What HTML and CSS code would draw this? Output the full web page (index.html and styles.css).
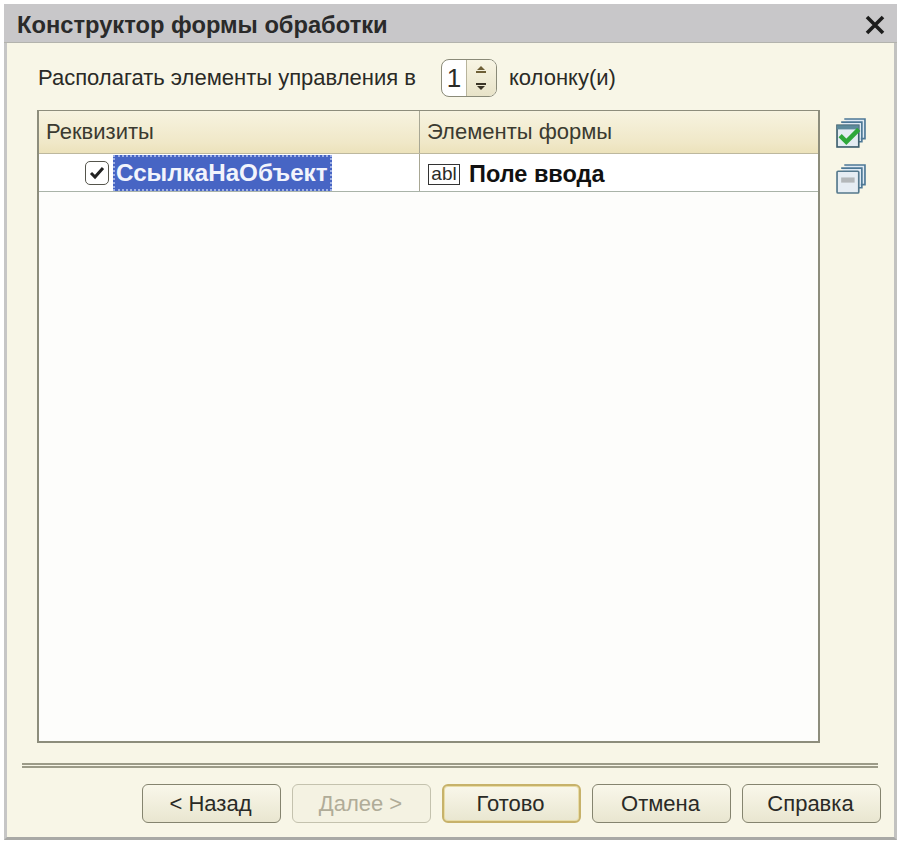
FILE: index.html
```html
<!DOCTYPE html>
<html lang="ru">
<head>
    <meta charset="UTF-8">
    <title>Конструктор формы обработки</title>
    <link rel="stylesheet" href="styles.css">
</head>
<body>
    <div class="window">
        <div class="titlebar">
            <span class="title">Конструктор формы обработки</span>
            <svg class="close" width="20" height="20" viewBox="0 0 20 20">
                <path d="M2 2 L18 18 M18 2 L2 18" stroke="#1c1c1c" stroke-width="3.6" fill="none"/>
            </svg>
        </div>
        <div class="content">
            <div class="columns-row">
                <span>Располагать элементы управления в</span>
                <div class="spinner">
                    <span class="spinner-value">1</span>
                    <span class="spinner-arrows">
                        <svg width="12" height="30" viewBox="0 0 12 30">
                            <path d="M6 3 L10 7 H2 Z M1 8 H11 V10 H1 Z" fill="#6e5f36"/>
                            <path d="M1 20 H11 V22 H1 Z M2 23 H10 L6 27 Z" fill="#3a3426"/>
                        </svg>
                    </span>
                </div>
                <span>колонку(и)</span>
            </div>

            <div class="table-row">
                <div class="table">
                    <div class="table-head">
                        <div class="cell col-left">Реквизиты</div>
                        <div class="cell col-right">Элементы формы</div>
                    </div>
                    <div class="table-line">
                        <div class="cell col-left attr-cell">
                            <span class="checkbox">
                                <svg width="16" height="14" viewBox="0 0 16 14">
                                    <path d="M2 7 L6 11 L14 2" stroke="#222" stroke-width="3" fill="none"/>
                                </svg>
                            </span>
                            <span class="selected">СсылкаНаОбъект</span>
                        </div>
                        <div class="cell col-right element-cell">
                            <span class="abl">abl</span>
                            <b>Поле ввода</b>
                        </div>
                    </div>
                </div>
                <div class="side-tools">
                    <svg width="30" height="30" viewBox="2 1 29 29">
                        <path d="M10 2 H30 V21 H26 M7 5 H27 V24 H23" fill="#dfeaf4" stroke="#4d7896" stroke-width="1.6"/>
                        <rect x="3" y="8" width="21" height="21" fill="#e4ecf2" stroke="#3e5f6e" stroke-width="1.6"/>
                        <rect x="3" y="8" width="21" height="4" fill="#5d8a9c"/>
                        <path d="M6 18 L12 24 L24 12" stroke="#2fa83a" stroke-width="4.4" fill="none"/>
                    </svg>
                    <svg width="30" height="30" viewBox="2 1 29 29">
                        <path d="M10 2 H30 V21 H26 M7 5 H27 V24 H23" fill="#dfeaf4" stroke="#4d7896" stroke-width="1.6"/>
                        <rect x="3" y="8" width="21" height="21" rx="1" fill="#e6edf3" stroke="#54788c" stroke-width="1.6"/>
                        <rect x="7" y="14" width="13" height="5" fill="#b4b8ba"/>
                    </svg>
                </div>
            </div>

            <div class="separator"></div>

            <div class="buttons">
                <button class="btn">&lt; Назад</button>
                <button class="btn" disabled>Далее &gt;</button>
                <button class="btn btn-default">Готово</button>
                <button class="btn">Отмена</button>
                <button class="btn">Справка</button>
            </div>
        </div>
    </div>
</body>
</html>
```

FILE: styles.css
```css
html, body {
    margin: 0;
    height: 100%;
    background: #ffffff;
}

body {
    padding: 4px 5px 4px 4px;
    box-sizing: border-box;
    font-family: 'Liberation Sans', Arial, sans-serif;
    font-size: 22px;
    color: #2a2a26;
}

.window {
    height: 100%;
    display: flex;
    flex-direction: column;
    box-sizing: border-box;
    border: 3px solid #c6c6c6;
    border-top: none;
    border-bottom-color: #a9a9a6;
    border-right-color: #c2c2c0;
}

.titlebar {
    height: 39px;
    flex: none;
    margin: 0 -3px;
    padding: 4px 12px 0 13px;
    background: #c8c7c9;
    border-bottom: 1px solid #b3b3ad;
    box-sizing: border-box;
    display: flex;
    justify-content: space-between;
    align-items: center;
}

.title {
    font-size: 23.7px;
    font-weight: bold;
    color: #2a2a2a;
}

.content {
    flex: 1;
    display: flex;
    flex-direction: column;
    background: #f8f6e7;
    padding: 0 13px 14px 30px;
    min-height: 0;
}

.columns-row {
    height: 67px;
    flex: none;
    box-sizing: border-box;
    padding: 3px 0 0 1px;
    display: flex;
    align-items: center;
}

.spinner {
    width: 56px;
    height: 38px;
    margin: 0 12px 0 25px;
    display: flex;
    box-sizing: border-box;
    border: 1px solid #8a8a78;
    border-radius: 8px;
    overflow: hidden;
    background: #fff;
}

.spinner-value {
    flex: 1;
    text-align: center;
    line-height: 36px;
    font-size: 26px;
}

.spinner-arrows {
    width: 29px;
    display: flex;
    align-items: center;
    justify-content: center;
    border-left: 1px solid #b8b49c;
    background: linear-gradient(to bottom, #f8f5e4, #e8e3c8);
}

.table-row {
    flex: 1;
    display: flex;
    min-height: 0;
}

.table {
    width: 783px;
    flex: none;
    box-sizing: border-box;
    border: 2px solid #8d8d7c;
    border-top-width: 1px;
    background: #fdfdfb;
}

.table-head {
    height: 42px;
    display: flex;
    background: linear-gradient(to bottom, #f7f3e0, #f0e8c8 75%, #ece2bb);
    border-bottom: 1px solid #bdb89e;
    color: #3a3a30;
}

.table-line {
    height: 37px;
    display: flex;
    background: #fff;
    border-bottom: 1px solid #a9b3a8;
}

.cell {
    display: flex;
    align-items: center;
    box-sizing: border-box;
}

.col-left {
    width: 381px;
    padding-left: 7px;
    border-right: 1px solid #a8a794;
}

.col-right {
    flex: 1;
    padding-left: 7px;
}

.attr-cell {
    padding-left: 46px;
}

.checkbox {
    width: 24px;
    height: 24px;
    margin-right: 4px;
    box-sizing: border-box;
    display: flex;
    align-items: center;
    justify-content: center;
    border: 1px solid #55554c;
    border-radius: 5px;
    background: #fff;
}

.selected {
    height: 36px;
    line-height: 36px;
    box-sizing: border-box;
    padding: 0 4px 0 3px;
    font-weight: bold;
    font-size: 24.2px;
    color: #f2f4fc;
    background: #4765c4;
    outline: 2px dotted #9fb0e6;
    outline-offset: -2px;
}

.abl {
    width: 32px;
    height: 21px;
    margin: 0 9px 0 1px;
    box-sizing: border-box;
    border: 1px solid #333;
    font-size: 19px;
    line-height: 18px;
    text-align: center;
    background: #fff;
}

.element-cell {
    padding-top: 3px;
}

.element-cell b {
    font-size: 23.5px;
    color: #111;
}

.side-tools {
    display: flex;
    flex-direction: column;
    gap: 16px;
    padding: 8px 0 0 16px;
}

.separator {
    height: 1px;
    flex: none;
    margin: 20px 3px 0 -15px;
    border-top: 2px solid #9c9b88;
    border-bottom: 2px solid #9c9b88;
}

.buttons {
    display: flex;
    justify-content: flex-end;
    gap: 11px;
    margin-top: 16px;
}

.btn {
    width: 139px;
    height: 39px;
    padding: 0 2px 0 0;
    font: inherit;
    color: #2a2a26;
    border: 1px solid #85846f;
    border-radius: 6px;
    background: linear-gradient(to bottom, #f9f7ea, #e9e6d0);
}

.btn:disabled {
    color: #b0ac98;
    border-color: #c4c2ae;
    background: #f4f2e2;
}

.btn-default {
    border: 2px solid #c7b26a;
    box-shadow: inset 0 0 0 1px #e8dca6;
}
```
